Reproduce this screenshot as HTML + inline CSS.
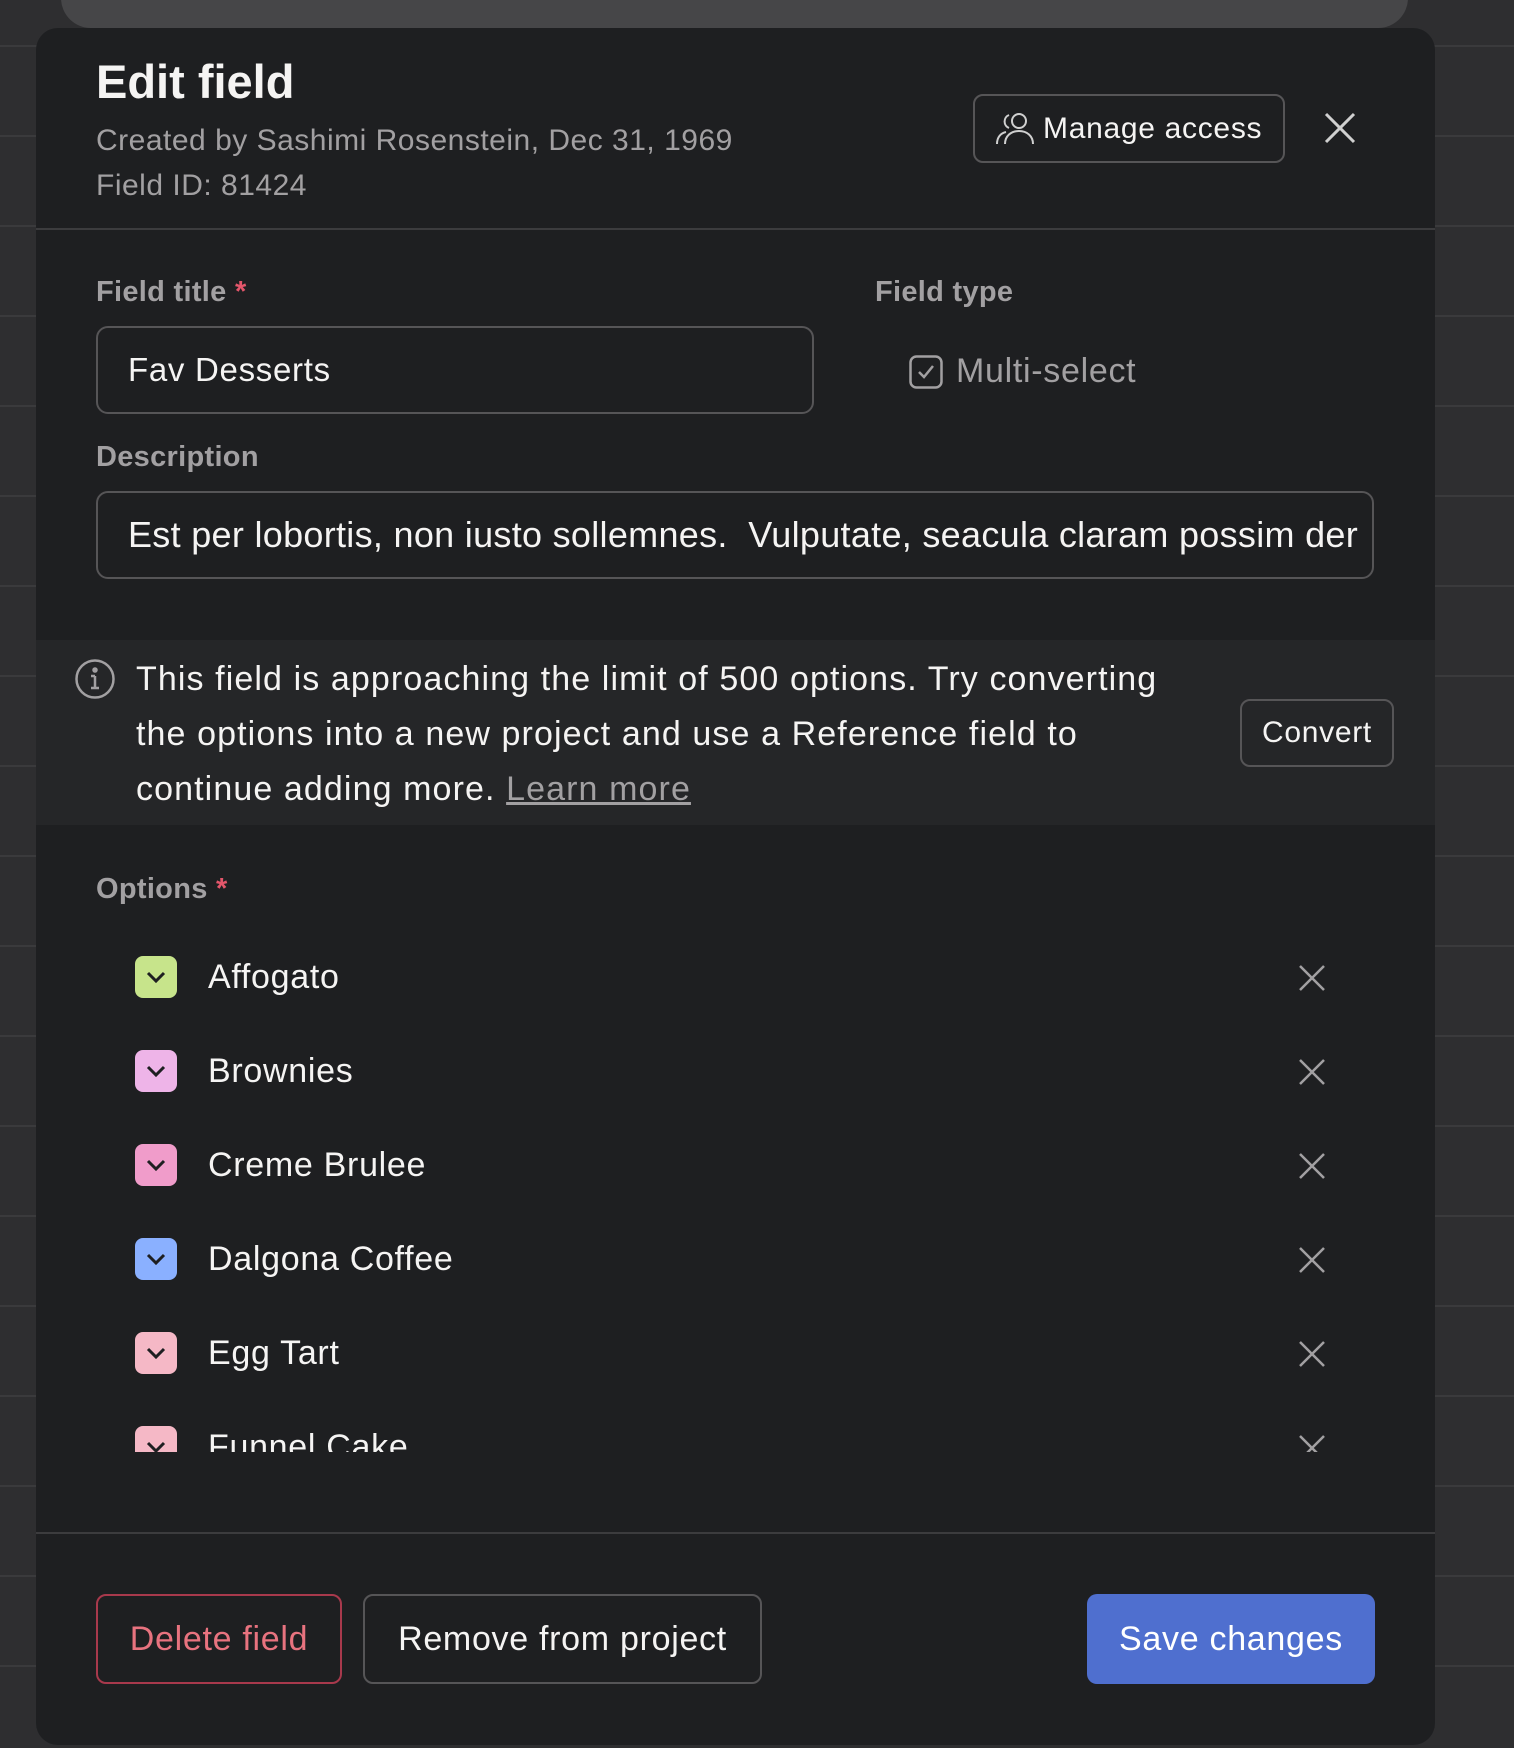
<!DOCTYPE html>
<html><head><meta charset="utf-8"><style>
*{box-sizing:border-box;margin:0;padding:0}
body{width:1514px;height:1748px;overflow:hidden;background:#2e2e30;font-family:"Liberation Sans",sans-serif;position:relative;letter-spacing:0.7px}
.grid{position:absolute;inset:0;background-image:linear-gradient(#3a3a3c 2px,transparent 2px);background-size:100% 90px;background-position:0 45px}
.search{position:absolute;left:61px;top:-40px;width:1347px;height:68px;border-radius:30px;background:#464648}
.modal{position:absolute;left:36px;top:28px;width:1399px;height:1717px;background:#1e1f21;border-radius:22px;overflow:hidden}
.abs{position:absolute}
.lbl{color:#a2a0a2;font-size:29px;font-weight:bold}
.req{color:#e3566b}
.inp{border:2px solid #565557;border-radius:12px;color:#f5f4f3;font-size:33px;padding-left:30px;display:flex;align-items:center}
.opt{position:absolute;left:99px;width:1190px;height:60px;display:flex;align-items:center}
.sw{width:42px;height:42px;border-radius:8px;display:flex;align-items:center;justify-content:center}
.opt span{color:#f5f4f3;font-size:34px;margin-left:31px}
.x{position:absolute;right:0;top:18px}
.btn{position:absolute;top:1566px;height:90px;border-radius:10px;font-size:34px;display:flex;align-items:center;justify-content:center}
</style></head><body>
<div class="grid"></div>
<div class="search"></div>
<div class="modal">
 <div class="abs" style="left:60px;top:26px;color:#f5f4f3;font-size:47px;font-weight:bold;letter-spacing:0">Edit field</div>
 <div class="abs" style="left:60px;top:96px;color:#a2a0a2;font-size:30px;letter-spacing:0.5px">Created by Sashimi Rosenstein, Dec 31, 1969</div>
 <div class="abs" style="left:60px;top:141px;color:#a2a0a2;font-size:30px;letter-spacing:0.5px">Field ID: 81424</div>
 <div class="abs" style="left:937px;top:66px;width:312px;height:69px;border:2px solid #565557;border-radius:10px;display:flex;align-items:center;padding-left:20px;color:#f5f4f3;font-size:30px">
  <svg width="40" height="36" viewBox="0 0 40 36" fill="none" stroke="#d0d0d0" stroke-width="2"><circle cx="24" cy="10" r="7"/><path d="M10 33c0-8 6-13 14-13s14 5 14 13"/><path d="M14 4a7 7 0 0 0 0 13M2 33c0-7 4-11 9-12"/></svg>
  <span style="margin-left:8px">Manage access</span></div>
 <svg class="abs" style="left:1288px;top:84px" width="32" height="32" stroke="#d0d0d0" stroke-width="3"><path d="M2 2L30 30M30 2L2 30"/></svg>
 <div class="abs" style="left:0;top:200px;width:100%;height:2px;background:#3c3c3e"></div>

 <div class="abs lbl" style="left:60px;top:248px;letter-spacing:0.3px">Field title <span class="req">*</span></div>
 <div class="abs inp" style="left:60px;top:298px;width:718px;height:88px">Fav Desserts</div>
 <div class="abs lbl" style="left:839px;top:248px;letter-spacing:0.3px">Field type</div>
 <svg class="abs" style="left:873px;top:327px" width="34" height="34" fill="none" stroke="#a2a0a2" stroke-width="2.5"><rect x="1.5" y="1.5" width="31" height="31" rx="6"/><path d="M10 17l5 5 9-11"/></svg>
 <div class="abs" style="left:920px;top:324px;color:#a2a0a2;font-size:34px">Multi-select</div>

 <div class="abs lbl" style="left:60px;top:413px;letter-spacing:0.3px">Description</div>
 <div class="abs inp" style="left:60px;top:463px;width:1278px;height:88px;white-space:nowrap;overflow:hidden;font-size:36px;letter-spacing:0.3px">Est per lobortis, non iusto sollemnes.&nbsp; Vulputate, seacula claram possim der</div>

 <div class="abs" style="left:0;top:612px;width:100%;height:185px;background:#252628"></div>
 <svg class="abs" style="left:38px;top:630px" width="42" height="42" fill="none" stroke="#a2a0a2" stroke-width="2.5"><circle cx="21" cy="21" r="18.5"/><path d="M21 18v12M17 30h8M17 18h4"/><circle cx="21" cy="12" r="1.5" fill="#a2a0a2"/></svg>
 <div class="abs" style="left:100px;top:624px;width:1100px;color:#f5f4f3;font-size:34px;line-height:55px;white-space:nowrap;letter-spacing:1.1px">This field is approaching the limit of 500 options. Try converting<br>the options into a new project and use a Reference field to<br>continue adding more. <span style="color:#a2a0a2;text-decoration:underline">Learn more</span></div>
 <div class="abs" style="left:1204px;top:671px;width:154px;height:68px;border:2px solid #565557;border-radius:10px;color:#f5f4f3;font-size:30px;display:flex;align-items:center;justify-content:center">Convert</div>

 <div class="abs lbl" style="left:60px;top:845px;letter-spacing:0.3px">Options <span class="req">*</span></div>
 <div class="abs" style="left:0;top:900px;width:100%;height:524px;overflow:hidden">
  <div class="opt" style="top:19px"><div class="sw" style="background:#c7e48b"><svg width="20" height="12" fill="none" stroke="#1e1f21" stroke-width="3"><path d="M2 2l8 8 8-8"/></svg></div><span>Affogato</span><svg class="x" width="26" height="26" stroke="#a2a0a2" stroke-width="2.5"><path d="M1 1L25 25M25 1L1 25"/></svg></div>
  <div class="opt" style="top:113px"><div class="sw" style="background:#eeb4e8"><svg width="20" height="12" fill="none" stroke="#1e1f21" stroke-width="3"><path d="M2 2l8 8 8-8"/></svg></div><span>Brownies</span><svg class="x" width="26" height="26" stroke="#a2a0a2" stroke-width="2.5"><path d="M1 1L25 25M25 1L1 25"/></svg></div>
  <div class="opt" style="top:207px"><div class="sw" style="background:#f09cca"><svg width="20" height="12" fill="none" stroke="#1e1f21" stroke-width="3"><path d="M2 2l8 8 8-8"/></svg></div><span>Creme Brulee</span><svg class="x" width="26" height="26" stroke="#a2a0a2" stroke-width="2.5"><path d="M1 1L25 25M25 1L1 25"/></svg></div>
  <div class="opt" style="top:301px"><div class="sw" style="background:#8ab0ff"><svg width="20" height="12" fill="none" stroke="#1e1f21" stroke-width="3"><path d="M2 2l8 8 8-8"/></svg></div><span>Dalgona Coffee</span><svg class="x" width="26" height="26" stroke="#a2a0a2" stroke-width="2.5"><path d="M1 1L25 25M25 1L1 25"/></svg></div>
  <div class="opt" style="top:395px"><div class="sw" style="background:#f5b8c6"><svg width="20" height="12" fill="none" stroke="#1e1f21" stroke-width="3"><path d="M2 2l8 8 8-8"/></svg></div><span>Egg Tart</span><svg class="x" width="26" height="26" stroke="#a2a0a2" stroke-width="2.5"><path d="M1 1L25 25M25 1L1 25"/></svg></div>
  <div class="opt" style="top:489px"><div class="sw" style="background:#f5b8c6"><svg width="20" height="12" fill="none" stroke="#1e1f21" stroke-width="3"><path d="M2 2l8 8 8-8"/></svg></div><span>Funnel Cake</span><svg class="x" width="26" height="26" stroke="#a2a0a2" stroke-width="2.5"><path d="M1 1L25 25M25 1L1 25"/></svg></div>
 </div>

 <div class="abs" style="left:0;top:1504px;width:100%;height:2px;background:#3c3c3e"></div>
 <div class="btn" style="left:60px;width:246px;border:2px solid #a8394c;color:#e8737f">Delete field</div>
 <div class="btn" style="left:327px;width:399px;border:2px solid #565557;color:#f5f4f3">Remove from project</div>
 <div class="btn" style="left:1051px;width:288px;background:#4f6fcf;color:#fff">Save changes</div>
</div>
</body></html>
